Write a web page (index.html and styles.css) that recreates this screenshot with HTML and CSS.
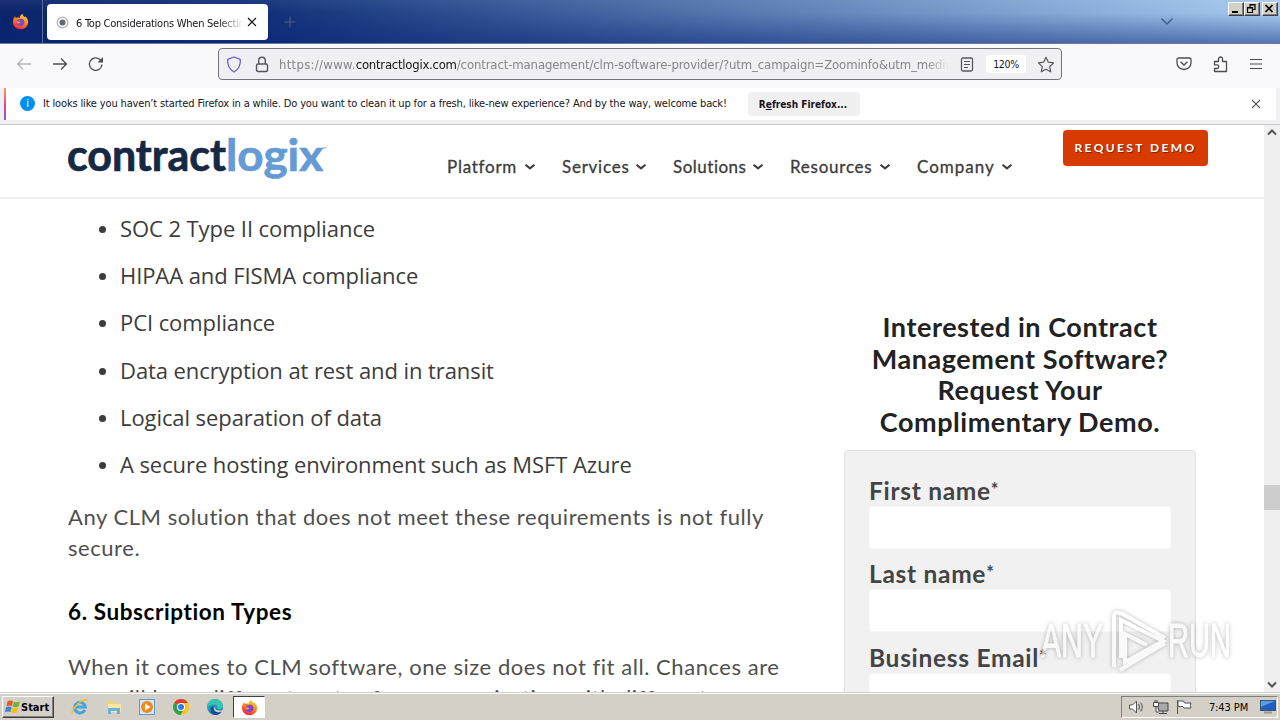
FILE: index.html
```
<!DOCTYPE html>
<html lang="en">
<head>
    <meta charset="UTF-8">
    <meta name="viewport" content="width=device-width, initial-scale=1.0">
    <title>6 Top Considerations When Selecting a CLM Software Provider</title>
    <link rel="stylesheet" href="styles.css">
</head>
<body>
    <svg class="defs" width="0" height="0">
        <defs>
            <linearGradient id="fire" x1="0.8" y1="0" x2="0.3" y2="1">
                <stop offset="0" stop-color="#ffe226"/>
                <stop offset="0.45" stop-color="#ff8a16"/>
                <stop offset="1" stop-color="#f5204e"/>
            </linearGradient>
            <linearGradient id="edge" x1="0" y1="0" x2="1" y2="1">
                <stop offset="0" stop-color="#35c1a8"/>
                <stop offset="1" stop-color="#0b5fb8"/>
            </linearGradient>
        </defs>
        <symbol id="firefox" viewBox="0 0 18 18">
            <path d="M9 17.200C4.300 17.200 1 13.700 1 9.300 1 6.800 2.200 4.600 3.300 3.500L4 5.200 6 4.500 8 5.400C8.200 3.400 9.600 1.800 11.200.8c0 1.700.8 2.500 2 3.500L14.300 3.600C16 5.200 17.100 7 17.100 9.400 17.100 13.800 13.500 17.200 9 17.200z" fill="url(#fire)"/>
            <path d="M5.200 8C6 6.700 7.500 6.800 8.700 6.400 10.500 5.300 13.400 7 13.200 10 13 12.300 11.200 13.800 9 13.800 6.500 13.800 4.800 12 4.800 10z" fill="#7b45d8"/>
            <path d="M4.800 9C6.300 8.300 7.300 9.200 9.300 9.500 8.700 10.700 7.200 10.400 6.700 11.500 5.700 11 5 10.200 4.800 9z" fill="#ff9a20"/>
        </symbol>
        <symbol id="chev" viewBox="0 0 12 8">
            <path d="M1.500 1.800 6 5.400l4.500-3.600" fill="none" stroke="#3c3c3c" stroke-width="2"/>
        </symbol>
    </svg>

    <div class="browser">
        <!-- Tab strip -->
        <div class="titlebar">
            <div class="fx-view"><svg width="17" height="17"><use href="#firefox"/></svg></div>
            <div class="tab">
                <svg class="favicon" width="13" height="13" viewBox="0 0 13 13"><circle cx="6.500" cy="6.500" r="5.300" fill="#fff" stroke="#b8b8b8" stroke-width="1.400"/><circle cx="6.500" cy="6.500" r="3" fill="#606870"/></svg>
                <span class="tab-title">6 Top Considerations When Selecting</span>
                <svg width="10" height="10" viewBox="0 0 10 10"><path d="M1 1l8 8M9 1L1 9" stroke="#15141a" stroke-width="1.200"/></svg>
            </div>
            <svg class="new-tab" width="12" height="12" viewBox="0 0 12 12"><path d="M6 .5v11M.5 6h11" stroke="#56616f"/></svg>
            <svg class="all-tabs" width="14" height="9" viewBox="0 0 14 9"><path d="M1.500 1.500 7 7l5.500-5.500" fill="none" stroke="#405f8d" stroke-width="1.400"/></svg>
            <div class="win-buttons">
                <span class="win-btn"><svg width="13" height="11"><path d="M3 9h6" stroke="#000" stroke-width="2"/></svg></span>
                <span class="win-btn"><svg width="13" height="11"><path d="M5 4V1.500h5V6.500H8M5 2h5M2.500 4.500h5v5h-5zM2 5h6" fill="none" stroke="#000" stroke-width="1.200"/></svg></span>
                <span class="win-btn last"><svg width="13" height="11"><path d="M2.500 2l7 7M9.500 2l-7 7" stroke="#000" stroke-width="1.700"/></svg></span>
            </div>
        </div>

        <!-- Navigation toolbar -->
        <div class="toolbar">
            <svg width="16" height="14" viewBox="0 0 16 14"><path d="M15 7H1.500M7 1.500 1.500 7 7 12.500" fill="none" stroke="#b4b4bb" stroke-width="1.300"/></svg>
            <svg width="16" height="14" viewBox="0 0 16 14"><path d="M1 7h13.500M9 1.500 14.500 7 9 12.500" fill="none" stroke="#4c4c55" stroke-width="1.300"/></svg>
            <svg width="16" height="16" viewBox="0 0 16 16"><path d="M14 8.500A6.300 6.300 0 1 1 12 3.500L14.500 5.800" fill="none" stroke="#4c4c55" stroke-width="1.300"/><path d="M15 1v5.500H9.500z" fill="#4c4c55"/></svg>
            <div class="urlbar">
                <svg width="16" height="17" viewBox="0 0 16 17"><path d="M8 1 14.300 3.400Q15 12 8 16 1 12 1.700 3.400z" fill="none" stroke="#665fc5" stroke-width="1.300" stroke-linejoin="round"/></svg>
                <svg class="lock" width="14" height="17" viewBox="0 0 14 17"><path d="M3.700 8V4.500a3.300 3.300 0 0 1 6.600 0V8" fill="none" stroke="#55555c" stroke-width="1.400"/><rect x="1.500" y="8" width="11" height="7.500" rx="1.500" fill="none" stroke="#55555c" stroke-width="1.400"/></svg>
                <span class="url"><span class="scheme">https://www.</span><b>contractlogix.com</b>/contract-management/clm-software-provider/?utm_campaign=Zoominfo&amp;utm_mediu</span>
                <svg class="reader" width="14" height="15" viewBox="0 0 14 15"><rect x="1.500" y="1" width="11" height="13" rx="1.500" fill="none" stroke="#55555c" stroke-width="1.300"/><path d="M4 4.500h6M4 7.500h6M4 10.500h4" stroke="#55555c" stroke-width="1.200"/></svg>
                <span class="zoom">120%</span>
                <svg width="18" height="17" viewBox="0 0 18 17"><path d="M9 1.300l2.300 4.900 5.300.7-3.900 3.700 1 5.200L9 13.200l-4.700 2.600 1-5.200L1.400 6.900l5.300-.7z" fill="none" stroke="#55555c" stroke-width="1.200" stroke-linejoin="round"/></svg>
            </div>
            <svg class="pocket" width="16" height="14" viewBox="0 0 16 14"><path d="M2.500 1h11Q15 1 15 2.500V6A7 6.500 0 0 1 1 6V2.500Q1 1 2.500 1zM4.500 4.800 8 8l3.500-3.200" fill="none" stroke="#4c4c55" stroke-width="1.300"/></svg>
            <svg class="ext" width="15" height="17" viewBox="0 0 15 17"><path d="M1.500 5.500H5.500V3a2 2 0 0 1 4 0V5.500H13.500V15.500H1.500V12.500H4a1.800 1.800 0 0 0 0-3.600H1.500z" fill="none" stroke="#4c4c55" stroke-width="1.300" stroke-linejoin="round"/></svg>
            <svg class="menu" width="12" height="12" viewBox="0 0 12 12"><path d="M0 1.500h12M0 6h12M0 10.500h12" stroke="#4c4c55" stroke-width="1.200"/></svg>
        </div>

        <!-- Notification bar -->
        <div class="notice">
            <span class="info">i</span>
            <span class="notice-text">It looks like you haven’t started Firefox in a while. Do you want to clean it up for a fresh, like-new experience? And by the way, welcome back!</span>
            <span class="refresh">R<u>e</u>fresh Firefox...</span>
            <svg class="notice-close" width="10" height="10" viewBox="0 0 10 10"><path d="M1 1l8 8M9 1L1 9" stroke="#5b5b66" stroke-width="1.100"/></svg>
        </div>

        <div class="viewport">
            <div class="page">
                <header class="header">
                    <svg class="logo" width="262" height="60" viewBox="0 0 262 60">
                        <text class="logo-text dark" x="0" y="46" textLength="159" lengthAdjust="spacingAndGlyphs">contract</text>
                        <text class="logo-text light" x="159" y="46" textLength="97" lengthAdjust="spacingAndGlyphs">logix</text>
                        <text class="tm" x="255" y="26">™</text>
                    </svg>
                    <nav class="nav">
                        <a class="n1">Platform <svg width="12" height="8"><use href="#chev"/></svg></a>
                        <a class="n2">Services <svg width="12" height="8"><use href="#chev"/></svg></a>
                        <a class="n3">Solutions <svg width="12" height="8"><use href="#chev"/></svg></a>
                        <a class="n4">Resources <svg width="12" height="8"><use href="#chev"/></svg></a>
                        <a class="n5">Company <svg width="12" height="8"><use href="#chev"/></svg></a>
                    </nav>
                    <a class="demo">REQUEST DEMO</a>
                </header>
                <div class="content">
                    <article class="article">
                        <ul>
                            <li>SOC 2 Type II compliance</li>
                            <li>HIPAA and FISMA compliance</li>
                            <li>PCI compliance</li>
                            <li>Data encryption at rest and in transit</li>
                            <li>Logical separation of data</li>
                            <li>A secure hosting environment such as MSFT Azure</li>
                        </ul>
                        <p>Any CLM solution that does not meet these requirements is not fully<br>secure.</p>
                        <h3>6. Subscription Types</h3>
                        <p class="types">When it comes to CLM software, one size does not fit all. Chances are<br>you will have different parts of your organization with different</p>
                    </article>
                    <aside class="sidebar">
                        <h2>Interested in Contract<br>Management Software?<br>Request Your<br>Complimentary Demo.</h2>
                        <form class="form">
                            <label>First name<sup>*</sup></label>
                            <input type="text">
                            <label>Last name<sup>*</sup></label>
                            <input type="text">
                            <label>Business Email<sup>*</sup></label>
                            <input type="text">
                        </form>
                    </aside>
                </div>
            </div>
            <div class="scrollbar">
                <svg width="10" height="7" viewBox="0 0 10 7"><path d="M1 5.500 5 1.500l4 4" fill="none" stroke="#555" stroke-width="2"/></svg>
                <div class="thumb"></div>
                <svg width="10" height="7" viewBox="0 0 10 7"><path d="M1 1.500l4 4 4-4" fill="none" stroke="#555" stroke-width="2"/></svg>
            </div>
        </div>
    </div>

    <svg class="watermark" width="200" height="70" viewBox="0 0 200 70">
        <text x="3" y="52" textLength="62" lengthAdjust="spacingAndGlyphs">ANY</text>
        <path d="M76 62V12q0-7 7-3M83 53V15l42 21-38 21V29l22 11M83 8l44 25M82 65l45-27" fill="none" stroke="#fff" stroke-width="4"/>
        <text x="130" y="52" textLength="63" lengthAdjust="spacingAndGlyphs">RUN</text>
    </svg>

    <!-- Taskbar -->
    <div class="taskbar">
        <div class="start">
            <svg width="16" height="16" viewBox="0 0 16 16"><path d="M2.500 2.500Q5 .8 8 2.300L6.800 7.200Q4 6 1.300 7.300z" fill="#e8562a"/><path d="M8.800 2.800Q11.500 4 14.800 2.500L13.600 7.500Q10.500 9 7.700 7.600z" fill="#72b52d"/><path d="M1 8.300Q4 7 6.600 8.200L5.400 13Q2.500 12-.2 13.300z" fill="#3f83d2"/><path d="M7.400 8.600Q10.500 10 13.400 8.500L12 13.500Q9 15 6.200 13.600z" fill="#f5bf22"/></svg>
            Start
        </div>
        <div class="launch">
            <svg width="18" height="18" viewBox="0 0 18 18"><path d="M13.800 12A5.300 5.300 0 1 1 14.300 9H5" fill="none" stroke="#42a6df" stroke-width="3"/><path d="M1.500 15.500C-.5 12 12-1 16.500 2.500" fill="none" stroke="#efbd36" stroke-width="1.500"/></svg>
            <svg width="18" height="18" viewBox="0 0 18 18"><path d="M2 3h5l1 2h7v9H2z" fill="#efd375"/><path d="M3 6h13v8H3z" fill="#f9e9a4"/><path d="M3 16v-6h12v6h-3v-3H6v3z" fill="#67b3dc"/></svg>
            <svg width="18" height="18" viewBox="0 0 18 18"><rect x="1.500" y="1.500" width="15" height="15" fill="#d2e8f8" stroke="#5c9bce"/><circle cx="9" cy="9" r="6" fill="#f28a19"/><path d="M7 5.500v7L12.500 9z" fill="#fff"/></svg>
            <svg width="18" height="18" viewBox="0 0 18 18"><circle cx="9" cy="9" r="8" fill="#f8c51c"/><path d="M9 9 2.100 5A8 8 0 0 1 16 5H9z" fill="#e33b2e"/><path d="M9 9 2.100 5A8 8 0 0 0 8.500 17l3.500-6z" fill="#2ca24c"/><circle cx="9" cy="9" r="4" fill="#fff"/><circle cx="9" cy="9" r="3" fill="#3178e8"/></svg>
            <svg width="18" height="18" viewBox="0 0 18 18"><circle cx="9" cy="9" r="8" fill="url(#edge)"/><path d="M1 9C1.500 3.500 6 1 9 1c5 0 8 3.500 8 7 0 3-3 4-6 3 1.500-3-1.500-5-4-4.500C4 6.500 2 7.500 1 9z" fill="#38c3b2"/><path d="M7.500 8Q6 12 10 14q3 1.200 6-.8-3 4-7 3.800Q4 15 4.500 11 5 8.500 7.500 8z" fill="#124b91"/><path d="M9 9c0 4 4 4 8 3l-1 1.500c-4 2-8 0-8-3z" fill="#d4d0c8"/></svg>
        </div>
        <div class="active-app"><svg width="17" height="17"><use href="#firefox"/></svg></div>
        <div class="tray">
            <svg width="17" height="16" viewBox="0 0 17 16"><path d="M1.500 6h3l4-4v12l-4-4h-3z" fill="#fff" stroke="#555"/><path d="M10.500 5q2 3 0 6M12.500 3.500q3.500 4.500 0 9" fill="none" stroke="#666" stroke-width="1.100"/></svg>
            <svg width="17" height="16" viewBox="0 0 17 16"><path d="M5 4h11v8H7z" fill="#aaa" stroke="#444"/><path d="M7 14.500h8M11 12v2" stroke="#444"/><path d="M1.500 3.500h5v4h-5zM3 1v2M5 1v2M4 8v5h3" fill="#fff" stroke="#444"/></svg>
            <svg width="17" height="16" viewBox="0 0 17 16"><path d="M1.500 1v14M2 2h5.500l1 2H15q-1.500 2 0 5H8l-1-1.500H2z" fill="#fff" stroke="#555"/></svg>
            <span class="clock">7:43 PM</span>
            <svg width="16" height="14" viewBox="0 0 16 14"><rect x=".5" y=".5" width="15" height="10" fill="#1e5fc0" stroke="#40546e"/><path d="M1 1h14L1 7z" fill="#5b9be8"/><path d="M4 12.500h8" stroke="#999" stroke-width="2"/></svg>
        </div>
    </div>
</body>
</html>
```
FILE: styles.css
```
* {
    box-sizing: border-box;
}

body {
    margin: 0;
    width: 1280px;
    height: 720px;
    overflow: hidden;
    background: #fff;
    font-family: "DejaVu Sans Condensed", "DejaVu Sans", sans-serif;
    font-size: 11px;
    color: #15141a;
}

svg {
    display: block;
    flex: none;
}

.defs {
    position: absolute;
}

.browser {
    height: 692px;
    display: flex;
    flex-direction: column;
    overflow: hidden;
}

/* tab strip */
.titlebar {
    flex: none;
    height: 44px;
    display: flex;
    align-items: center;
    background: linear-gradient(to bottom, rgba(255, 255, 255, 0.06), rgba(10, 36, 106, 0) 30%, rgba(10, 36, 120, 0.5)), linear-gradient(to right, #0a246a, #102f78 20%, #a6caf0);
    border-bottom: 1px solid #6b7a9c;
}

.fx-view {
    width: 43px;
    height: 43px;
    padding: 13px 0 0 12px;
    border-right: 1px solid #5b6c9c;
}

.tab {
    width: 221px;
    height: 36px;
    margin: 1px 0 0 4px;
    padding: 0 11px 0 9px;
    display: flex;
    align-items: center;
    background: #fff;
    border-radius: 4px;
}

.tab-title {
    width: 168px;
    margin: 2px 3px 0 7px;
    overflow: hidden;
    white-space: nowrap;
    letter-spacing: -0.25px;
    -webkit-mask-image: linear-gradient(to left, transparent, #000 25px);
    mask-image: linear-gradient(to left, transparent, #000 25px);
}

.new-tab {
    margin-left: 16px;
}

.all-tabs {
    margin-left: auto;
}

.win-buttons {
    display: flex;
    align-self: flex-start;
    margin: 2px 2px 0 54px;
}

.win-btn {
    width: 16px;
    height: 14px;
    background: #d4d0c8;
    border: 1px solid;
    border-color: #fff #404040 #404040 #fff;
    box-shadow: inset -1px -1px #808080;
}

.win-btn.last {
    margin-left: 2px;
}

/* toolbar */
.toolbar {
    flex: none;
    height: 44px;
    padding: 0 18px 4px 16px;
    display: flex;
    align-items: center;
    gap: 20px;
    background: #f9f9fb;
}

.urlbar {
    width: 844px;
    height: 32px;
    margin: 0 auto 0 94px;
    padding: 0 6px 0 7px;
    display: flex;
    align-items: center;
    background: #f0f0f4;
    border: 1px solid #73737b;
    border-radius: 4px;
}

.lock {
    margin-left: 13px;
}

.url {
    width: 673px;
    margin: 0 10px;
    overflow: hidden;
    white-space: nowrap;
    font-size: 13px;
    letter-spacing: -0.12px;
    color: #85858c;
    -webkit-mask-image: linear-gradient(to left, transparent, #000 25px);
    mask-image: linear-gradient(to left, transparent, #000 25px);
}

.scheme {
    letter-spacing: 0.3px;
}

.url b {
    font-weight: normal;
    letter-spacing: -0.25px;
    color: #15141a;
}

.zoom {
    width: 40px;
    margin: 0 11px 0 12px;
    line-height: 18px;
    text-align: center;
    background: #fff;
    border-radius: 3px;
    font-size: 10.5px;
    letter-spacing: -0.3px;
}

.ext {
    margin-left: 1px;
}

.menu {
    margin: 0 0 0 2px;
}

/* notification */
.notice {
    flex: none;
    height: 37px;
    padding: 0 19px 5px 20px;
    display: flex;
    align-items: center;
    background: linear-gradient(to bottom, #ff9a56, #e83f92 55%, #9059d8) 4px 0 / 2px 32px no-repeat, linear-gradient(#fff, #fff) 5px 0 / 1271px 32px no-repeat, #f0f0f2;
    border-bottom: 1px solid #c8c8cc;
}

.info {
    width: 15px;
    height: 15px;
    line-height: 15px;
    text-align: center;
    border-radius: 50%;
    background: #0090ed;
    color: #fff;
}

.notice-text {
    width: 705px;
    margin-left: 8px;
    white-space: nowrap;
    letter-spacing: -0.15px;
}

.refresh {
    width: 112px;
    height: 24px;
    line-height: 25px;
    padding-right: 2px;
    text-align: center;
    font-size: 10px;
    font-weight: bold;
    background: #f0f0f1;
    border-radius: 4px;
}

.notice-close {
    margin: 0 0 0 auto;
}

/* web page */
.viewport {
    flex: 1;
    min-height: 0;
    display: flex;
}

.page {
    width: 1264px;
    overflow: hidden;
    background: #fff;
    color: #3c3c3c;
    font-variant-ligatures: none;
}

.header {
    height: 74px;
    padding-left: 67px;
    display: flex;
    border-bottom: 2px solid #ececec;
}

.logo-text {
    font-family: Lato, sans-serif;
    font-size: 43px;
    font-weight: bold;
    stroke-width: 0.7px;
}

.dark {
    fill: #152844;
    stroke: #152844;
}

.light {
    fill: #659bd4;
    stroke: #659bd4;
}

.tm {
    font-family: Lato, sans-serif;
    font-size: 6px;
    fill: #999;
}

.nav {
    width: 616px;
    margin-left: 118px;
    padding-top: 31px;
    display: flex;
    font-family: Lato, sans-serif;
    font-size: 17px;
    line-height: 21px;
    letter-spacing: 0.75px;
}

.nav a {
    display: flex;
    align-items: center;
    justify-content: space-between;
    height: 21px;
    -webkit-text-stroke: 0.3px #3c3c3c;
}

.n1 {
    width: 89px;
    margin-right: 26px;
}

.n2 {
    width: 85px;
    margin-right: 26px;
}

.n3 {
    width: 91px;
    margin-right: 26px;
    letter-spacing: 0.5px;
}

.n4 {
    width: 101px;
    margin-right: 26px;
}

.n5 {
    width: 96px;
    letter-spacing: 1px;
}

.demo {
    width: 145px;
    height: 36px;
    margin-top: 5px;
    line-height: 35px;
    text-align: center;
    border-radius: 4px;
    background: #d83b01;
    color: #fff;
    font-family: Lato, sans-serif;
    font-size: 12px;
    font-weight: bold;
    letter-spacing: 2.4px;
    text-shadow: 1px 1px 1px #7a2000;
}

.content {
    display: flex;
    padding: 14px 68px 0;
}

.article {
    width: 776px;
    font-family: Lato, sans-serif;
    font-size: 22px;
    line-height: 31px;
    white-space: nowrap;
}

.article ul {
    margin: 0;
    padding-left: 52px;
    font-family: "Open Sans", sans-serif;
    line-height: 31.2px;
    letter-spacing: -0.08px;
}

.article li {
    margin-bottom: 16px;
}

.article li::marker {
    font-size: 20px;
}

.article p {
    margin: 21px 0 0;
    letter-spacing: 0.55px;
    color: #505050;
}

.article h3 {
    margin: 33px 0 24px;
    font-size: 22.5px;
    letter-spacing: 0.6px;
    color: #000;
}

.sidebar {
    width: 352px;
    padding-top: 98px;
    font-family: Lato, sans-serif;
}

.sidebar h2 {
    margin: 0 0 12px;
    font-size: 27px;
    line-height: 31.7px;
    letter-spacing: 0.55px;
    text-align: center;
    white-space: nowrap;
    color: #222;
}

.form {
    height: 330px;
    padding: 25px 24px;
    background: #f1f1f1;
    border: 1px solid #e0e0e0;
    border-radius: 4px;
}

.form label {
    display: block;
    height: 30px;
    line-height: 29px;
    font-size: 24.5px;
    font-weight: bold;
    letter-spacing: 0.7px;
    color: #444;
}

.form sup {
    font-size: 18px;
    line-height: 0;
    vertical-align: 4px;
}

.form input {
    display: block;
    width: 302px;
    height: 43px;
    margin-bottom: 10.5px;
    border: 1px solid #f8f8f8;
    border-radius: 3px;
    background: #fff;
}

.scrollbar {
    width: 16px;
    padding: 4px 0;
    display: flex;
    flex-direction: column;
    align-items: center;
    background: #f0f0f0;
}

.thumb {
    width: 16px;
    height: 25px;
    margin: 349px 0 auto;
    background: #cdcdcd;
}

.watermark {
    position: absolute;
    left: 1038px;
    top: 605px;
    opacity: 0.6;
    filter: drop-shadow(0 0 2px rgba(0, 0, 0, 0.45));
}

.watermark text {
    font-family: "Liberation Sans", sans-serif;
    font-size: 48px;
    fill: #fff;
    stroke: #fff;
    stroke-width: 1px;
}

/* taskbar */
.taskbar {
    height: 28px;
    padding: 3px 2px 3px;
    display: flex;
    background: #d4d0c8;
    border-top: 1px solid #d4d0c8;
    box-shadow: inset 0 1px #fff;
}

.start {
    width: 52px;
    height: 22px;
    padding-left: 2px;
    display: flex;
    align-items: center;
    border: 1px solid;
    border-color: #fff #404040 #404040 #fff;
    box-shadow: inset -1px -1px #808080;
    font-weight: bold;
    color: #000;
}

.launch {
    display: flex;
    gap: 15.7px;
    margin-left: 17px;
    padding-top: 2px;
}

.active-app {
    width: 32px;
    height: 22px;
    margin-left: 9px;
    padding: 2px 0 0 7px;
    background: #fff;
    border: 1px solid;
    border-color: #404040 #fff #fff #404040;
}

.tray {
    width: 157px;
    height: 22px;
    margin-left: auto;
    padding: 0 1px 0 6px;
    display: flex;
    align-items: center;
    gap: 7px;
    border: 1px solid;
    border-color: #808080 #fff #fff #808080;
}

.clock {
    margin: 0 auto;
    padding-left: 4px;
    white-space: nowrap;
    letter-spacing: -0.1px;
    color: #000;
}
```
